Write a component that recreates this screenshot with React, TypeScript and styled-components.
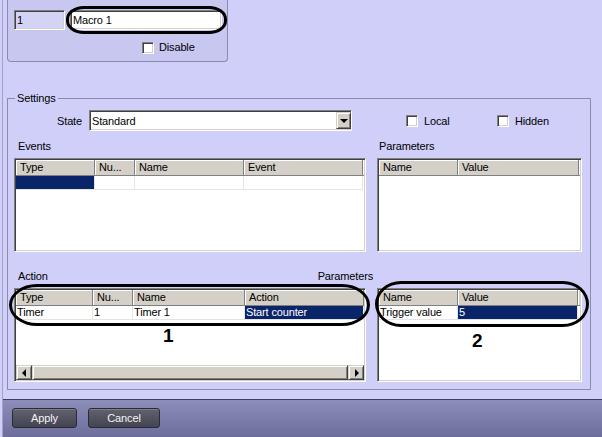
import React from 'react';
import styled, { createGlobalStyle, css } from 'styled-components';

const GlobalStyle = createGlobalStyle`
  html, body {
    margin: 0;
    padding: 0;
  }
  body {
    background: #cfcff9;
    font-family: "Liberation Sans", Arial, sans-serif;
    font-size: 11px;
    letter-spacing: -0.15px;
    color: #000;
  }
  * {
    box-sizing: border-box;
  }
`;

// classic win32 bevels
const sunken = css`
  border: 1px solid;
  border-color: #808080 #ffffff #ffffff #808080;
  box-shadow: inset 1px 1px 0 #404040, inset -1px -1px 0 #d4d0c8;
  padding: 1px;
`;

const raised = css`
  background: #d4d0c8;
  border: 1px solid;
  border-color: #d4d0c8 #404040 #404040 #d4d0c8;
  box-shadow: inset 1px 1px 0 #ffffff, inset -1px -1px 0 #808080;
`;

const Window = styled.div`
  width: 602px;
  height: 437px;
  display: flex;
  padding-left: 2px;
  background: #cfcff9;
  overflow: hidden;
`;

const Column = styled.div`
  flex: 1;
  display: flex;
  flex-direction: column;
  border-left: 1px solid #a2a2c6;
`;

const Main = styled.div`
  flex: 1;
  display: flex;
  flex-direction: column;
  padding: 0 11px 0 4px;
`;

const TopPanel = styled.div`
  width: 221px;
  height: 62px;
  background: #c7c7f0;
  border: 1px solid #8a8aac;
  border-top: none;
  border-radius: 0 0 4px 4px;
  padding: 10px 0 0 6px;
  display: flex;
  flex-direction: column;
`;

const FieldRow = styled.div`
  display: flex;
  gap: 5px;
`;

const IdField = styled.div`
  ${sunken};
  width: 51px;
  height: 20px;
  background: #d3d3f6;
  padding-left: 2px;
  line-height: 16px;
`;

const NameField = styled.div`
  ${sunken};
  position: relative;
  width: 152px;
  height: 20px;
  background: #fff;
  padding-left: 2px;
  line-height: 16px;
`;

const Ellipse = styled.div<{ $l: number; $t: number; $w: number; $h: number; $r: string }>`
  position: absolute;
  left: ${(p) => p.$l}px;
  top: ${(p) => p.$t}px;
  width: ${(p) => p.$w}px;
  height: ${(p) => p.$h}px;
  border: 3px solid #000;
  border-radius: ${(p) => p.$r};
  pointer-events: none;
`;

const Mark = styled.div<{ $l: number; $t: number }>`
  position: absolute;
  left: ${(p) => p.$l}px;
  top: ${(p) => p.$t}px;
  font-size: 19px;
  font-weight: bold;
  line-height: 19px;
  letter-spacing: 0;
`;

const DisableRow = styled.label`
  display: flex;
  align-items: center;
  gap: 5px;
  margin-top: 11px;
  padding-left: 128px;
  line-height: 13px;
`;

const CheckBox = styled.span`
  ${sunken};
  width: 12px;
  height: 12px;
  background: #fff;
  flex-shrink: 0;
`;

const GroupBox = styled.fieldset`
  margin: 30px 0 0 0;
  padding: 0 8px 7px 6px;
  border: 1px solid #8c8ca8;
  min-width: 0;
`;

const Legend = styled.legend`
  margin-left: 1px;
  padding: 0 2px;
  line-height: 13px;
`;

const GroupGrid = styled.div`
  display: grid;
  grid-template-columns: 352px 205px;
  column-gap: 11px;
`;

const StateRow = styled.div`
  grid-column: 1 / -1;
  margin-top: 5px;
  height: 21px;
  display: flex;
  align-items: center;
`;

const StateLabel = styled.span`
  width: 75px;
  text-align: right;
  padding-right: 7px;
`;

const Select = styled.div`
  ${sunken};
  width: 263px;
  height: 21px;
  background: #fff;
  display: flex;
  align-items: center;
  justify-content: space-between;
  padding: 1px 0 1px 2px;
`;

const DropButton = styled.span`
  ${raised};
  width: 15px;
  height: 17px;
  display: flex;
  align-items: center;
  justify-content: center;
  &::after {
    content: '';
    border-left: 4px solid transparent;
    border-right: 4px solid transparent;
    border-top: 4px solid #000;
    margin-top: 1px;
  }
`;

const CheckItem = styled.label<{ $ml: number; $w?: number }>`
  display: flex;
  align-items: center;
  gap: 6px;
  margin-left: ${(p) => p.$ml}px;
  width: ${(p) => (p.$w ? `${p.$w}px` : 'auto')};
`;

const Caption = styled.div<{ $pl: number }>`
  margin-top: 9px;
  padding-left: ${(p) => p.$pl}px;
  line-height: 13px;
`;

const ActionCaptionRow = styled.div`
  grid-column: 1 / -1;
  margin-top: 18px;
  display: flex;
  justify-content: space-between;
  padding: 0 209px 0 4px;
  line-height: 13px;
`;

const TableFrame = styled.div<{ $mt: number }>`
  ${sunken};
  position: relative;
  margin-top: ${(p) => p.$mt}px;
  height: 94px;
  background: #fff;
  display: flex;
  flex-direction: column;
`;

const Header = styled.div`
  display: flex;
  height: 16px;
  flex-shrink: 0;
`;

const HeadCell = styled.div<{ $w: number }>`
  width: ${(p) => p.$w}px;
  flex-shrink: 0;
  background: #d4d0c8;
  border-right: 1px solid #808080;
  border-bottom: 1px solid #808080;
  box-shadow: inset 1px 1px 0 #fff;
  padding-left: 4px;
  line-height: 15px;
  white-space: nowrap;
  overflow: hidden;
`;

const HeadFill = styled.div`
  flex: 1;
  background: #d4d0c8;
  border-bottom: 1px solid #808080;
  box-shadow: inset 1px 1px 0 #fff;
`;

const Row = styled.div`
  display: flex;
  height: 14px;
  flex-shrink: 0;
`;

const Cell = styled.div<{ $w: number; $sel?: boolean }>`
  width: ${(p) => p.$w}px;
  flex-shrink: 0;
  border-right: 1px solid #e4e4e4;
  border-bottom: 1px solid #e4e4e4;
  padding-left: 1px;
  line-height: 13px;
  white-space: nowrap;
  overflow: hidden;
  background: ${(p) => (p.$sel ? '#0a246a' : 'transparent')};
  color: ${(p) => (p.$sel ? '#fff' : '#000')};
`;

const ScrollBar = styled.div`
  margin-top: auto;
  height: 15px;
  display: flex;
  flex-shrink: 0;
`;

const ScrollButton = styled.span<{ $dir: 'left' | 'right' }>`
  ${raised};
  width: 16px;
  display: flex;
  align-items: center;
  justify-content: center;
  &::after {
    content: '';
    border-top: 4px solid transparent;
    border-bottom: 4px solid transparent;
    ${(p) =>
      p.$dir === 'left'
        ? 'border-right: 4px solid #000; margin-right: 1px;'
        : 'border-left: 4px solid #000; margin-left: 1px;'}
  }
`;

const Thumb = styled.span`
  ${raised};
  flex: 1;
`;

const BottomBar = styled.div`
  height: 38px;
  flex-shrink: 0;
  border-top: 1px solid #3e3e62;
  background: linear-gradient(#8d8db9, #6d6d9b);
  display: flex;
  gap: 11px;
  padding: 8px 0 0 9px;
`;

const Button = styled.button<{ $w: number }>`
  width: ${(p) => p.$w}px;
  height: 20px;
  border: 1px solid #2a2a3a;
  border-radius: 3px;
  background: linear-gradient(#62626f, #434351);
  box-shadow: inset 0 1px 0 rgba(255, 255, 255, 0.18);
  color: #f4f4f4;
  font-family: inherit;
  font-size: 11px;
  letter-spacing: -0.1px;
  padding: 0;
`;

const eventCols = [79, 40, 109, 119];
const actionCols = [77, 40, 112, 119];

export default function App() {
  return (
    <>
      <GlobalStyle />
      <Window>
        <Column>
          <Main>
            <TopPanel>
              <FieldRow>
                <IdField>1</IdField>
                <NameField>
                  Macro 1
                  <Ellipse $l={-5} $t={-5} $w={161} $h={28} $r="18px / 13px" />
                </NameField>
              </FieldRow>
              <DisableRow>
                <CheckBox />
                Disable
              </DisableRow>
            </TopPanel>

            <GroupBox>
              <Legend>Settings</Legend>
              <GroupGrid>
                <StateRow>
                  <StateLabel>State</StateLabel>
                  <Select>
                    <span>Standard</span>
                    <DropButton />
                  </Select>
                  <CheckItem $ml={54} $w={91}>
                    <CheckBox />
                    Local
                  </CheckItem>
                  <CheckItem $ml={0}>
                    <CheckBox />
                    Hidden
                  </CheckItem>
                </StateRow>

                <Caption $pl={4}>Events</Caption>
                <Caption $pl={2}>Parameters</Caption>

                <TableFrame $mt={5}>
                  <Header>
                    {['Type', 'Nu...', 'Name', 'Event'].map((h, i) => (
                      <HeadCell key={h} $w={eventCols[i]}>
                        {h}
                      </HeadCell>
                    ))}
                    <HeadFill />
                  </Header>
                  <Row>
                    {eventCols.map((w, i) => (
                      <Cell key={i} $w={w} $sel={i === 0} />
                    ))}
                  </Row>
                </TableFrame>

                <TableFrame $mt={5}>
                  <Header>
                    <HeadCell $w={79}>Name</HeadCell>
                    <HeadCell $w={121}>Value</HeadCell>
                    <HeadFill />
                  </Header>
                </TableFrame>

                <ActionCaptionRow>
                  <span>Action</span>
                  <span>Parameters</span>
                </ActionCaptionRow>

                <TableFrame $mt={5}>
                  <Header>
                    {['Type', 'Nu...', 'Name', 'Action'].map((h, i) => (
                      <HeadCell key={h} $w={actionCols[i]}>
                        {h}
                      </HeadCell>
                    ))}
                    <HeadFill />
                  </Header>
                  <Row>
                    {['Timer', '1', 'Timer 1', 'Start counter'].map((v, i) => (
                      <Cell key={i} $w={actionCols[i]} $sel={i === 3}>
                        {v}
                      </Cell>
                    ))}
                  </Row>
                  <ScrollBar>
                    <ScrollButton $dir="left" />
                    <Thumb />
                    <ScrollButton $dir="right" />
                  </ScrollBar>
                  <Ellipse $l={-6} $t={-5} $w={361} $h={42} $r="28px / 21px" />
                  <Mark $l={148} $t={37}>1</Mark>
                </TableFrame>

                <TableFrame $mt={5}>
                  <Header>
                    <HeadCell $w={79}>Name</HeadCell>
                    <HeadCell $w={120}>Value</HeadCell>
                    <HeadFill />
                  </Header>
                  <Row>
                    <Cell $w={79}>Trigger value</Cell>
                    <Cell $w={120} $sel>
                      5
                    </Cell>
                  </Row>
                  <Ellipse $l={-3} $t={-8} $w={214} $h={46} $r="26px / 23px" />
                  <Mark $l={94} $t={42}>2</Mark>
                </TableFrame>
              </GroupGrid>
            </GroupBox>
          </Main>

          <BottomBar>
            <Button $w={65}>Apply</Button>
            <Button $w={72}>Cancel</Button>
          </BottomBar>
        </Column>
      </Window>
    </>
  );
}
